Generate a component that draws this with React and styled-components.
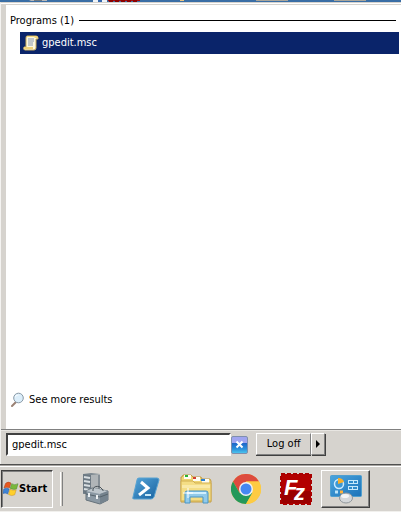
import React, { useEffect, useRef, useState } from 'react';
import styled, { createGlobalStyle } from 'styled-components';

const face = '#d6d3ce';

const GlobalStyle = createGlobalStyle`
  * { box-sizing: border-box; }
  body {
    margin: 0;
    background: ${face};
    color: #000;
    font: 11px/14px "DejaVu Sans Condensed", "DejaVu Sans", sans-serif;
  }
  button, input { font: inherit; color: inherit; padding: 0; margin: 0; border-radius: 0; }
  button { cursor: default; }
  svg { display: block; flex: none; }
`;

const Screen = styled.div`
  display: flex;
  flex-direction: column;
  height: 100vh;
  overflow: hidden;
`;

const Desktop = styled.div`
  height: 2px;
  flex: none;
  overflow: hidden;
  background: #3a6ea5;
`;

const StartMenu = styled.main`
  flex: 1;
  min-height: 0;
  display: flex;
  flex-direction: column;
  border-top: 1px solid ${face};
  border-left: 1px solid #f4f3f1;
  box-shadow: inset 0 1px #fff;
  padding-top: 2px;
`;

const Results = styled.section`
  flex: 1;
  display: flex;
  flex-direction: column;
  background: #fff;
  border-left: 5px solid ${face};
  padding: 8px 2px 21px 0;
  box-shadow: 0 -1px ${face};
`;

const GroupTitle = styled.h2`
  display: flex;
  align-items: center;
  gap: 5px;
  margin: 0 3px 4px 4px;
  font-size: 11px;
  font-weight: 400;
  line-height: 15px;
  white-space: nowrap;
  &::after { content: ''; flex: 1; height: 1px; background: #000; }
`;

const ResultItem = styled.button`
  display: flex;
  align-items: center;
  gap: 3px;
  height: 22px;
  margin-left: 14px;
  padding-left: 3px;
  border: 0;
  background: #0a246a;
  color: #fff;
`;

const MoreLink = styled.a`
  display: flex;
  align-items: center;
  gap: 3px;
  margin-top: auto;
  padding-left: 4px;
  color: #000;
  text-decoration: none;
`;

const SearchBar = styled.form`
  display: flex;
  align-items: center;
  flex: none;
  height: 35px;
  padding: 3px 0 8px 5px;
  border-top: 1px solid #808080;
  box-shadow: inset 0 1px #e8e6e2;
`;

const SearchField = styled.input`
  width: 57%;
  height: 23px;
  padding: 0 4px;
  border: 2px solid;
  border-color: #404040 #fff #fff #404040;
  background: #fff;
  outline: 0;
`;

const ClearButton = styled.button`
  display: grid;
  place-items: center;
  width: 17px;
  height: 18px;
  border: 1px solid #7f8fae;
  border-radius: 2px;
  background: linear-gradient(#a0a5f0 0 35%, #1c62c6 36%, #2c91dc 75%, #4cc4ed);
`;

const Split = styled.div`
  display: flex;
  margin-left: 8px;
  height: 23px;
`;

const Raised = styled.button`
  display: grid;
  place-items: center;
  width: ${(p) => p.$width};
  border: 1px solid;
  border-color: #fff #808080 #808080 #fff;
  box-shadow: 0 1px #404040;
  height: 22px;
  background: ${face};
  &:last-child { box-shadow: 1px 1px #404040; }
`;

const Taskbar = styled.nav`
  display: flex;
  align-items: flex-start;
  flex: none;
  height: 48px;
  padding: 5px 0 0 1px;
  border-top: 1px solid #505050;
  border-bottom: 1px solid #f1f0ed;
  background: ${face};
  box-shadow: inset 0 1px #a8a5a1, inset 0 2px #fff;
`;

const StartButton = styled.button`
  display: flex;
  align-items: center;
  width: 52px;
  height: 38px;
  padding-left: 1px;
  border: 1px solid;
  border-color: #404040 #fff #fff #404040;
  box-shadow: inset 1px 1px #808080;
  background: ${face};
  font-weight: 700;
`;

const Divider = styled.span`
  width: 3px;
  height: 34px;
  margin: 2px 8px 0 7px;
  border-left: 1px solid #fff;
  border-right: 1px solid #808080;
`;

const TaskButton = styled.button`
  display: grid;
  place-items: center;
  width: ${(p) => (p.$open ? '49px' : '50px')};
  height: 38px;
  border: ${(p) => (p.$open ? '1px solid' : '0')};
  border-color: #fff #404040 #404040 #fff;
  box-shadow: ${(p) => (p.$open ? 'inset -1px -1px #808080' : 'none')};
  background: transparent;
`;

const DesktopIcons = () => (
  <svg width="401" height="2" aria-hidden="true">
    <path d="M29 0h18v1H31z" fill="#b9b9b9" />
    <path d="M34 0h8v1h-8z" fill="#707980" />
    <path d="M93 0h14v2H93z" fill="#eef3f8" />
    <path d="M98 0h4v2h-4z" fill="#3569b0" />
    <path d="M108 0h32v1h-32z" fill="#a90a0a" />
    <path d="M109 1h30" stroke="#8b0000" strokeWidth="2" strokeDasharray="4 2" />
    <path d="M180 0h4v1h-4z" fill="#edc681" />
    <path d="M256 0h32v1h-32zM334 0h32v1h-32z" fill="#aaa69b" />
  </svg>
);

const ScrollIcon = () => (
  <svg width="16" height="16" viewBox="0 0 16 16" aria-hidden="true">
    <path d="M4 1h9q2 0 2 2v1h-2v9q0 2-2 2H2q-2 0-1-3h2V3q0-2 1-2z" fill="#fbf7df" stroke="#c9ac5b" />
    <path d="M4 1h9q2 0 2 2h-3l-1-1H4z" fill="#f3d67a" />
    <path d="M1 12h9v2H2q-1 0-1-2z" fill="#efd078" />
    <path d="M5 4h6M5 6h6M5 8h5M5 10h5" stroke="#8796b2" />
  </svg>
);

const MagnifierIcon = () => (
  <svg width="16" height="16" viewBox="0 0 16 16" aria-hidden="true">
    <path d="M6 10l-4 4" stroke="#9a8174" strokeWidth="2" strokeLinecap="round" />
    <circle cx="8.500" cy="6" r="4.800" fill="#dceefa" stroke="#8999a6" />
    <path d="M5 6q0-4 5-3Q6 3 5 6z" fill="#fff" />
  </svg>
);

const CrossIcon = () => (
  <svg width="9" height="9" viewBox="0 0 9 9" aria-hidden="true">
    <path d="M1.500 1.500l6 6m0-6l-6 6" stroke="#fff" strokeWidth="2" />
  </svg>
);

const ArrowIcon = () => (
  <svg width="5" height="8" viewBox="0 0 5 8" aria-hidden="true"><path d="M0 0l4 4-4 4z" /></svg>
);

const WindowsIcon = () => (
  <svg width="16" height="16" viewBox="0 0 16 16" aria-hidden="true">
    <path d="M2.500 2.500Q5 0 8 2L6.500 7Q4 5.500 1 7z" fill="#e8581f" stroke="#a7401e" strokeWidth=".5" />
    <path d="M8.700 2.700q3 2 6.300 0L13.500 8Q11 9 7.200 7.400z" fill="#7ab83c" stroke="#4d8734" strokeWidth=".5" />
    <path d="M.8 8q3-1.500 5.400 0l-1.500 5Q2.500 11.500-.2 12.500z" fill="#3e83d4" stroke="#285aa3" strokeWidth=".5" />
    <path d="M7 8.300q3 1.700 6.200.5l-1.500 5Q8.500 15.500 5.500 13.500z" fill="#ffd02c" stroke="#c6912b" strokeWidth=".5" />
  </svg>
);

const ServerIcon = () => (
  <svg width="32" height="32" viewBox="0 0 32 32" aria-hidden="true">
    <path d="M3 1l8-1 9 1v20H3z" fill="#7d8890" />
    <path d="M11 2l9-1v20h-9z" fill="#b0b5b8" />
    <path d="M18 2h2v18h-2z" fill="#858e95" />
    <path d="M3 1l8 1v21l-8-3z" fill="#6d7983" />
    <path d="M4 4l6 1M4 8l6 1M4 12l6 1M4 16l6 1" stroke="#d9dfe2" strokeWidth="2" />
    <path d="M6 18l6-3 16 3v9l-8 4-14-4z" fill="#8b99a4" stroke="#66727b" />
    <path d="M6 18l14 3 8-3-14-3z" fill="#bdc6cc" />
    <path d="M20 21v10l8-4v-9z" fill="#75838e" />
    <path d="M6 21l14 3 8-3" stroke="#56636c" fill="none" />
    <path d="M13 18v-2q2-4 7-2l3 3v1" fill="none" stroke="#4b545b" />
    <path d="M9 20v4M17 22v4" stroke="#edf1f3" strokeWidth="2" />
  </svg>
);

const PowerShellIcon = () => (
  <svg width="28" height="24" viewBox="0 0 28 24" aria-hidden="true">
    <defs><linearGradient id="ps" x1="0" y1="0" x2="1" y2="1"><stop stopColor="#55a5d9" /><stop offset="1" stopColor="#17619f" /></linearGradient></defs>
    <path d="M7 1h18q2 0 2 2l-5 17q-1 2-3 2H2q-2 0-1-2L5 3q0-2 2-2z" fill="url(#ps)" stroke="#58a2d1" />
    <path d="M9 5l7 6-9 7" fill="none" stroke="#fff" strokeWidth="3" />
    <path d="M13 18h6" stroke="#c9e8f7" strokeWidth="2" />
  </svg>
);

const ExplorerIcon = () => (
  <svg width="34" height="32" viewBox="0 0 34 32" aria-hidden="true">
    <path d="M3 4l1-2h8l2 2h8l1 2h8l1 2v21H2V4z" fill="#efd574" stroke="#c29c47" />
    <path d="M5 2h7v4H5zM14 4h7v4h-7zM23 6h7v4h-7z" fill="#fffdf2" />
    <path d="M6 2h3v2H6z" fill="#27b532" /><path d="M14 4h3v2h-3z" fill="#d33e32" /><path d="M22 6h4v2h-4z" fill="#287fd4" />
    <path d="M2 8h12l2 2h16v18H2z" fill="#f4dd85" stroke="#d1af53" />
    <path d="M3 12h28v3H3z" fill="#f9e9a8" />
    <path d="M6 30V20q0-2 2-2h19q2 0 2 2v10h-5v-6H11v6z" fill="#91caea" stroke="#4995c5" />
    <path d="M8 20h19" stroke="#d1f0ff" strokeWidth="2" />
    <path d="M9 15v10M4 20h10" stroke="#fff" />
  </svg>
);

const ChromeIcon = () => (
  <svg width="30" height="30" viewBox="0 0 30 30" aria-hidden="true">
    <circle cx="15" cy="15" r="15" fill="#fcc934" />
    <path d="M2 7.500A15 15 0 0 1 28 7.500H15L8.500 18.800z" fill="#dd4b3e" />
    <path d="M2 7.500A15 15 0 0 0 15 30l6.500-11.200H8.500z" fill="#23985a" />
    <path d="M28 7.500A15 15 0 0 1 15 30l6.500-11.200L15 7.500z" fill="#fdcb43" />
    <circle cx="15" cy="15" r="7" fill="#f1f1f1" /><circle cx="15" cy="15" r="5.500" fill="#4588f1" />
  </svg>
);

const FileZillaIcon = () => (
  <svg width="32" height="32" viewBox="0 0 32 32" role="img" aria-label="FileZilla">
    <path d="M1 1h30v30H1z" fill="#b30000" stroke="#a80000" strokeWidth="2" strokeDasharray="4 2" />
    <path d="M2 18h28v12H2z" fill="#9a0000" />
    <text x="4" y="22" fill="#fff" fontFamily="Liberation Sans, sans-serif" fontSize="22" fontWeight="700" fontStyle="italic">F<tspan x="14" y="27">z</tspan></text>
  </svg>
);

const ControlPanelIcon = () => (
  <svg width="32" height="30" viewBox="0 0 32 30" aria-hidden="true">
    <defs><linearGradient id="cp" x1="0" y1="0" x2="1" y2="1"><stop stopColor="#4aa5df" /><stop offset="1" stopColor="#1c72b8" /></linearGradient></defs>
    <rect x=".5" y="1.500" width="31" height="21" rx="1" fill="url(#cp)" stroke="#4f9fcf" />
    <circle cx="9" cy="10" r="4.500" fill="#3c98d5" stroke="#cbeaff" strokeWidth="1.500" />
    <path d="M8 10V4q5 0 6 4z" fill="#f9ae2a" />
    <path d="M18 8h10M18 14h10" stroke="#c7e9fb" strokeWidth="4" />
    <path d="M19 8h4M24 8h3M19 14h3M23 14h4" stroke="#318ccb" strokeWidth="2" />
    <path d="M5 18h3" stroke="#bde4f9" strokeWidth="3" /><path d="M10 18h3" stroke="#ffb13b" strokeWidth="3" />
    <ellipse cx="16" cy="24" rx="6.500" ry="5" fill="#d4d7da" stroke="#8f969c" /><ellipse cx="15" cy="22" rx="4" ry="2" fill="#f4f5f6" />
  </svg>
);

const tasks = [
  ['Server Manager', ServerIcon],
  ['Windows PowerShell', PowerShellIcon],
  ['Windows Explorer', ExplorerIcon],
  ['Google Chrome', ChromeIcon],
  ['FileZilla', FileZillaIcon],
  ['Control Panel', ControlPanelIcon, true],
];

export default function App() {
  const [query, setQuery] = useState('gpedit.msc');
  const field = useRef(null);
  useEffect(() => {
    field.current.focus();
    field.current.setSelectionRange(10, 10);
  }, []);

  return (
    <Screen>
      <GlobalStyle />
      <Desktop><DesktopIcons /></Desktop>
      <StartMenu>
        <Results>
          <GroupTitle>Programs (1)</GroupTitle>
          <ResultItem type="button"><ScrollIcon />gpedit.msc</ResultItem>
          <MoreLink href="#results"><MagnifierIcon />See more results</MoreLink>
        </Results>
        <SearchBar onSubmit={(e) => e.preventDefault()}>
          <SearchField ref={field} aria-label="Search programs and files" value={query} onChange={(e) => setQuery(e.target.value)} />
          <ClearButton type="button" aria-label="Clear search" onClick={() => setQuery('')}><CrossIcon /></ClearButton>
          <Split>
            <Raised type="button" $width="55px">Log off</Raised>
            <Raised type="button" $width="14px" aria-label="Shut down options"><ArrowIcon /></Raised>
          </Split>
        </SearchBar>
      </StartMenu>
      <Taskbar>
        <StartButton type="button"><WindowsIcon />Start</StartButton>
        <Divider />
        {tasks.map(([name, Icon, open]) => (
          <TaskButton key={name} type="button" aria-label={name} $open={open}><Icon /></TaskButton>
        ))}
      </Taskbar>
    </Screen>
  );
}
